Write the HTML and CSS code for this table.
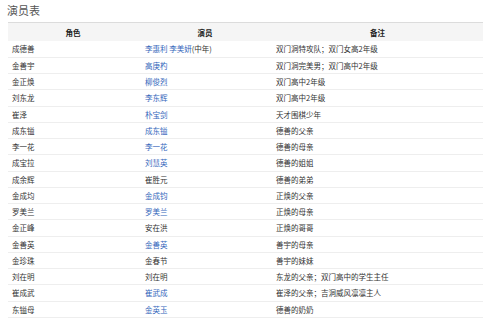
FILE: index.html
```html
<!DOCTYPE html>
<html lang="zh">
<head>
  <meta charset="UTF-8" />
  <title>演员表</title>
  <link rel="stylesheet" href="styles.css">
</head>
<body>
  <h2 class="title">演员表</h2>
  <table class="cast">
    <thead>
      <tr>
        <th class="col-role">角色</th>
        <th class="col-actor">演员</th>
        <th class="col-note">备注</th>
      </tr>
    </thead>
    <tbody>
      <tr><td>成德善</td><td><a href="#">李惠利</a> <a href="#">李美妍</a>(中年)</td><td>双门洞特攻队；双门女高2年级</td></tr>
      <tr><td>金善宇</td><td><a href="#">高庚杓</a></td><td>双门洞完美男；双门高中2年级</td></tr>
      <tr><td>金正焕</td><td><a href="#">柳俊烈</a></td><td>双门高中2年级</td></tr>
      <tr><td>刘东龙</td><td><a href="#">李东辉</a></td><td>双门高中2年级</td></tr>
      <tr><td>崔泽</td><td><a href="#">朴宝剑</a></td><td>天才围棋少年</td></tr>
      <tr><td>成东镒</td><td><a href="#">成东镒</a></td><td>德善的父亲</td></tr>
      <tr><td>李一花</td><td><a href="#">李一花</a></td><td>德善的母亲</td></tr>
      <tr><td>成宝拉</td><td><a href="#">刘慧英</a></td><td>德善的姐姐</td></tr>
      <tr><td>成余辉</td><td>崔胜元</td><td>德善的弟弟</td></tr>
      <tr><td>金成均</td><td><a href="#">金成钧</a></td><td>正焕的父亲</td></tr>
      <tr><td>罗美兰</td><td><a href="#">罗美兰</a></td><td>正焕的母亲</td></tr>
      <tr><td>金正峰</td><td>安在洪</td><td>正焕的哥哥</td></tr>
      <tr><td>金善英</td><td><a href="#">金善英</a></td><td>善宇的母亲</td></tr>
      <tr><td>金珍珠</td><td>金春节</td><td>善宇的妹妹</td></tr>
      <tr><td>刘在明</td><td>刘在明</td><td>东龙的父亲；双门高中的学生主任</td></tr>
      <tr><td>崔成武</td><td><a href="#">崔武成</a></td><td>崔泽的父亲；吉洞威风凛凛主人</td></tr>
      <tr><td>东镒母</td><td><a href="#">金英玉</a></td><td>德善的奶奶</td></tr>
    </tbody>
  </table>
</body>
</html>
```

FILE: styles.css
```css
:root {
  --text: #333;
  --link: #3366bb;
  --line: #eeeeee;
  --head-bg: #f5f5f5;
}

body {
  margin: 0;
  padding: 0 8px;
  background: #fff;
  font-family: "Noto Sans CJK SC", "Noto Sans", sans-serif;
  color: var(--text);
}

.title {
  margin: 3px 0 5px -1px;
  font-size: 11px;
  line-height: 14px;
  font-weight: normal;
  color: #555;
}

.cast {
  width: 475px;
  border-collapse: collapse;
  font-size: 7.5px;
}

.cast th {
  height: 18px;
  padding: 0;
  background: var(--head-bg);
  border-top: 1px solid #dcdcdc;
  font-weight: bold;
  text-align: center;
  color: #222;
}

.col-role { width: 130px; }
.col-actor { width: 134px; }

.cast td {
  height: 16.25px;
  padding: 0 0 0 4px;
  border-bottom: 1px solid var(--line);
  line-height: 15px;
  text-align: left;
  white-space: nowrap;
  box-sizing: border-box;
}

.cast td:nth-child(2) {
  padding-left: 7px;
}

.cast a {
  color: var(--link);
  text-decoration: none;
}
```
